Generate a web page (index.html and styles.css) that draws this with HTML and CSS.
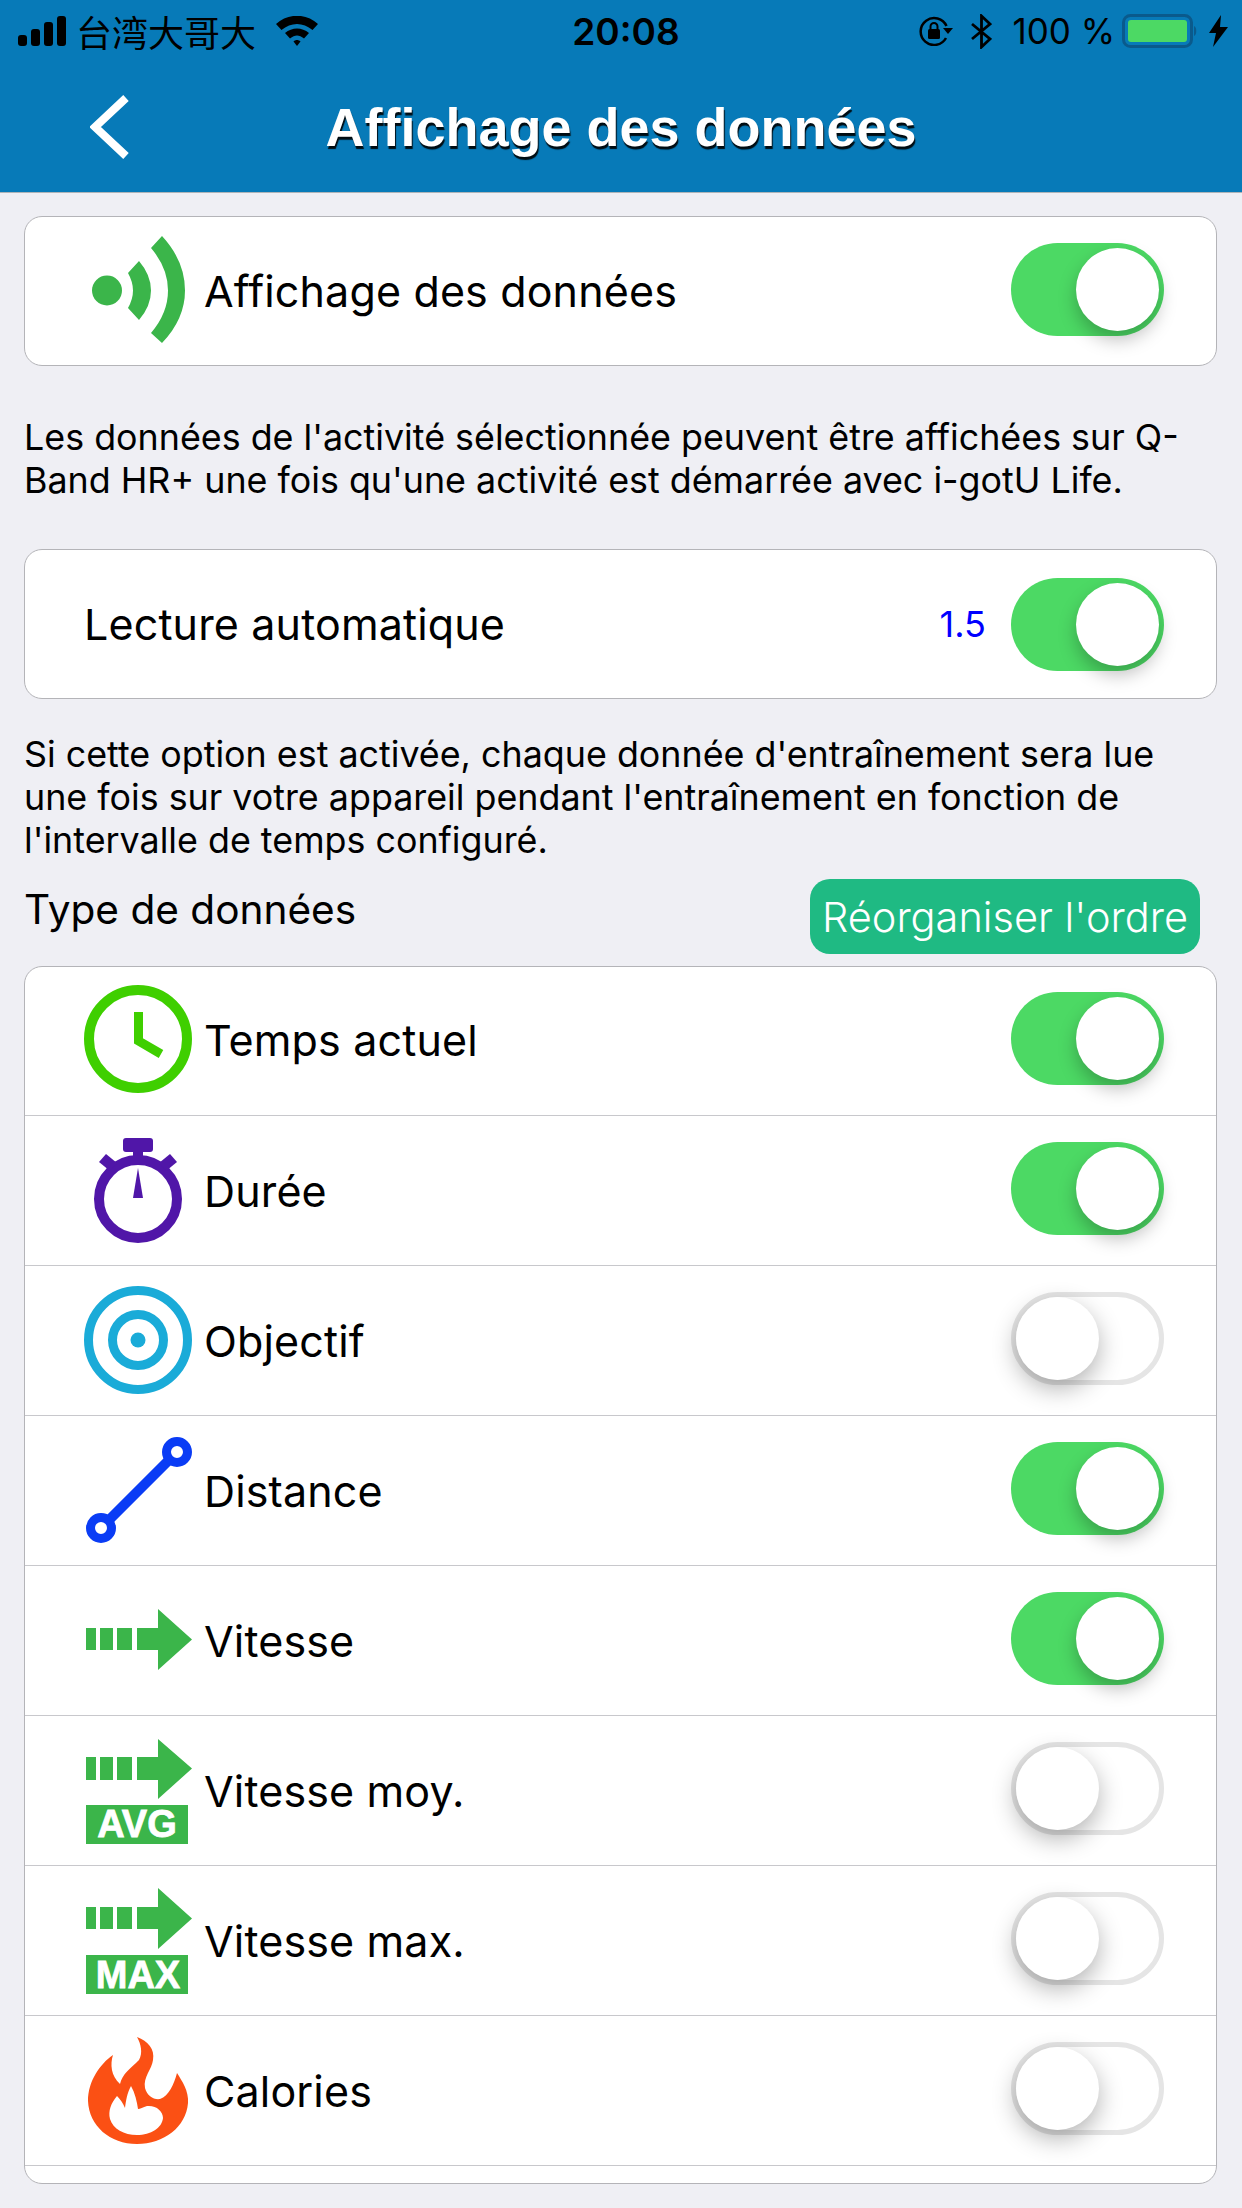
FILE: index.html
```html
<!DOCTYPE html>
<html lang="fr">
<head>
    <meta charset="UTF-8">
    <title>Affichage des données</title>
    <link rel="stylesheet" href="styles.css">
</head>
<body>
    <div class="top">
        <div class="status">
            <div class="status-left">
                <svg class="signal" width="48" height="30" viewBox="0 0 48 30" fill="#000">
                    <rect x="0" y="19" width="9" height="11" rx="3"/>
                    <rect x="13" y="13" width="9" height="17" rx="3"/>
                    <rect x="26" y="6" width="9" height="24" rx="3"/>
                    <rect x="39" y="0" width="9" height="30" rx="3"/>
                </svg>
                <span class="carrier">台湾大哥大</span>
                <svg class="wifi" width="42" height="30" viewBox="0 0 42 30" fill="#000">
                    <path d="M0 8C12-3 30-3 42 8L36.5 14C27 6 15 6 5.5 14Z"/>
                    <path d="M9 17C16 11 26 11 33 17L28 22.5C23 18.5 19 18.5 14 22.5Z"/>
                    <path d="M17.5 25.5C19.5 23.5 22.5 23.5 24.5 25.5L21 30Z"/>
                </svg>
            </div>
            <div class="time">20:08</div>
            <div class="status-right">
                <svg width="34" height="30" viewBox="0 0 34 30">
                    <path d="M27 22A13.5 13.5 0 1 1 27.500 10" fill="none" stroke="#000" stroke-width="2.500"/>
                    <path d="M24 12H34L29 18Z" fill="#000"/>
                    <rect x="9" y="13" width="12" height="10" rx="1.500" fill="#000"/>
                    <path d="M11.500 13V10.500A3.500 3.500 0 0 1 18.500 10.500V13" fill="none" stroke="#000" stroke-width="2"/>
                </svg>
                <svg class="bt" width="21" height="35" viewBox="0 0 21 35">
                    <path d="M1 10L19 25L10.500 33V2L19 10L1 25" fill="none" stroke="#000" stroke-width="2.800"/>
                </svg>
                <span class="percent">100 %</span>
                <svg class="battery" width="78" height="34" viewBox="0 0 78 34">
                    <rect x="1.500" y="1.500" width="68" height="31" rx="7" fill="none" stroke="#0a5a8c" stroke-width="3"/>
                    <rect x="6" y="6" width="59" height="22" rx="3" fill="#4cd964"/>
                    <path d="M72 12C75 13 75 21 72 22Z" fill="#0a5a8c"/>
                </svg>
                <svg class="bolt" width="19" height="32" viewBox="0 0 19 32">
                    <path d="M12 0L0 18H7L4 32L19 12H11Z" fill="#000"/>
                </svg>
            </div>
        </div>
        <div class="nav">
            <svg class="back" width="40" height="64" viewBox="0 0 40 64">
                <path d="M36 3L5 32L36 61" fill="none" stroke="#fff" stroke-width="8"/>
            </svg>
            <h1>Affichage des données</h1>
        </div>
    </div>

    <div class="content">
        <div class="card">
            <div class="row">
                <svg class="icon" width="120" height="120" viewBox="0 0 120 120" fill="#3bb54a">
                    <circle cx="27" cy="59.500" r="15"/>
                    <path d="M48 42L59 30Q71 44 71 59.500Q71 75 59 89L48 77Q53 68 53 59.500Q53 51 48 42Z"/>
                    <path d="M71 17L82 5Q105 30 105 59.500Q105 88 82 112L71 102Q88 82 88 59.500Q88 37 71 17Z"/>
                </svg>
                <span class="label">Affichage des données</span>
                <div class="toggle on"></div>
            </div>
        </div>

        <p class="note first">Les données de l'activité sélectionnée peuvent être affichées sur Q-Band HR+ une fois qu'une activité est démarrée avec i-gotU Life.</p>

        <div class="card">
            <div class="row plain">
                <span class="label">Lecture automatique</span>
                <span class="interval">1.5</span>
                <div class="toggle on"></div>
            </div>
        </div>

        <p class="note second">Si cette option est activée, chaque donnée d'entraînement sera lue une fois sur votre appareil pendant l'entraînement en fonction de l'intervalle de temps configuré.</p>

        <div class="type-head">
            <span class="type-title">Type de données</span>
            <button class="btn">Réorganiser l'ordre</button>
        </div>

        <div class="card list">
            <div class="row">
                <svg class="icon" width="120" height="120" viewBox="0 0 120 120">
                    <circle cx="58" cy="59" r="49" fill="none" stroke="#3fcf00" stroke-width="10"/>
                    <path d="M58.500 32V61L81 74" fill="none" stroke="#3fcf00" stroke-width="9"/>
                </svg>
                <span class="label">Temps actuel</span>
                <div class="toggle on"></div>
            </div>
            <div class="row">
                <svg class="icon" width="120" height="120" viewBox="0 0 120 120" fill="#5016a8">
                    <circle cx="58" cy="68" r="39" fill="none" stroke="#5016a8" stroke-width="10"/>
                    <rect x="43" y="7" width="30" height="14" rx="3"/>
                    <rect x="53" y="20" width="10" height="10"/>
                    <path d="M19 31L26 23L37 32L30 40Z"/>
                    <path d="M97 31L90 23L79 32L86 40Z"/>
                    <path d="M58 37L63 67H53Z"/>
                </svg>
                <span class="label">Durée</span>
                <div class="toggle on"></div>
            </div>
            <div class="row">
                <svg class="icon" width="120" height="120" viewBox="0 0 120 120" fill="none" stroke="#1aabd8">
                    <circle cx="58" cy="59" r="49.500" stroke-width="9"/>
                    <circle cx="58" cy="59" r="25.500" stroke-width="9"/>
                    <circle cx="58" cy="59" r="7.500" fill="#1aabd8" stroke="none"/>
                </svg>
                <span class="label">Objectif</span>
                <div class="toggle off"></div>
            </div>
            <div class="row">
                <svg class="icon" width="120" height="120" viewBox="0 0 120 120" fill="none" stroke="#0a3cf5">
                    <path d="M89 29L29 89" stroke-width="10"/>
                    <circle cx="97" cy="21" r="10.500" stroke-width="9"/>
                    <circle cx="21" cy="97" r="10.500" stroke-width="9"/>
                </svg>
                <span class="label">Distance</span>
                <div class="toggle on"></div>
            </div>
            <div class="row">
                <svg class="icon" width="120" height="120" viewBox="0 0 120 120" fill="#3bb54a">
                    <path d="M6 47H16V69H6ZM20 47H33V69H20ZM37 47H52V69H37ZM57 47H78V28L112 58.500L78 89V69H57Z"/>
                </svg>
                <span class="label">Vitesse</span>
                <div class="toggle on"></div>
            </div>
            <div class="row">
                <svg class="icon" width="120" height="120" viewBox="0 0 120 120" fill="#3bb54a">
                    <path d="M6 26H16V49H6ZM20 26H33V49H20ZM37 26H52V49H37ZM57 26H78V8L112 37.500L78 68V49H57Z"/>
                    <rect x="6" y="74" width="102" height="39"/>
                    <text class="badge-text" x="57" y="106">AVG</text>
                </svg>
                <span class="label">Vitesse moy.</span>
                <div class="toggle off"></div>
            </div>
            <div class="row">
                <svg class="icon" width="120" height="120" viewBox="0 0 120 120" fill="#3bb54a">
                    <path d="M6 26H16V48H6ZM20 26H33V48H20ZM37 26H52V48H37ZM57 26H78V7L112 37.500L78 68V48H57Z"/>
                    <rect x="6" y="74" width="102" height="39"/>
                    <text class="badge-text" x="58" y="107">MAX</text>
                </svg>
                <span class="label">Vitesse max.</span>
                <div class="toggle off"></div>
            </div>
            <div class="row">
                <svg class="icon" width="120" height="120" viewBox="0 0 120 120">
                    <path fill-rule="evenodd" fill="#fb5014" d="M57 6C68 10 75 18 73 29C72 38 63 46 65 57C67 65 74 69 80 68C89 65 94 53 97 42C102 50 109 60 108 72C106 96 84 113 57 113C30 113 9 95 8 70C8 50 20 33 33 24C30 33 31 45 40 53C42 43 51 37 59 29C63 22 61 13 57 6ZM51 55C47 62 46 70 45 77C43 72 40 68 37 65C31 72 28 80 30 88C33 98 44 104 57 104C71 104 82 97 83 87C83 80 76 74 67 75C63 76 60 78 58 78C57 71 55 62 51 55Z"/>
                </svg>
                <span class="label">Calories</span>
                <div class="toggle off"></div>
            </div>
            <div class="row-tail"></div>
        </div>
    </div>
</body>
</html>
```

FILE: styles.css
```css
* { margin: 0; padding: 0; box-sizing: border-box; }
body {
    font-family: Inter, "Noto Sans", sans-serif;
    background: #efeff4;
    color: #000;
    width: 1242px;
    height: 2208px;
    overflow: hidden;
}
.top {
    background: #077ab8;
    height: 193px;
    border-bottom: 1px solid #aeb4b8;
}
.status {
    height: 62px;
    display: grid;
    grid-template-columns: 1fr auto 1fr;
    align-items: center;
    padding: 0 14px 0 18px;
}
.status-left { display: flex; align-items: center; }
.status-right { display: flex; align-items: center; justify-content: flex-end; }
.carrier {
    font-family: "Noto Sans CJK TC", sans-serif;
    font-size: 36px;
    margin-left: 10px;
    margin-right: 20px;
}
.time { font-size: 37px; font-weight: 600; margin-left: 6px; }
.percent { font-size: 35px; margin: 0 7px 0 20px; }
.status-right .bt { margin-left: 18px; }
.status-right .bolt { margin-left: 9px; }
.nav {
    height: 130px;
    display: grid;
    grid-template-columns: 1fr auto 1fr;
    align-items: center;
}
.back { margin-left: 90px; }
.nav h1 {
    font-family: "Liberation Sans", Arial, sans-serif;
    font-size: 54px;
    font-weight: bold;
    color: #fff;
    text-shadow: 1px 3px 1px rgba(0,0,0,0.9);
}
.content { padding: 23px 25px 0 24px; }
.card {
    background: #fff;
    border: 1px solid #b4b4b8;
    border-radius: 18px;
    overflow: hidden;
}
.row {
    height: 148px;
    display: flex;
    align-items: center;
    padding-left: 55px;
    padding-right: 52px;
}
.list .row { height: 150px; border-bottom: 1px solid #c8c8cc; }
.list .row:first-child { height: 149px; padding-bottom: 2px; }
.row.plain { padding-left: 59px; }
.row-tail { height: 17px; }
.icon { flex: none; margin-right: 4px; }
.label { font-size: 43px; letter-spacing: 0.15px; flex: 1; }
.interval { font-size: 36px; color: #0000ff; margin-right: 25px; }
.badge-text {
    font-family: "Liberation Sans", Arial, sans-serif;
    font-size: 38px;
    font-weight: bold;
    fill: #fff;
    stroke: #fff;
    stroke-width: 0.8;
    text-anchor: middle;
}
.toggle {
    position: relative;
    flex: none;
    width: 153px;
    height: 93px;
    border-radius: 47px;
    margin-bottom: 4px;
}
.row.plain .toggle { margin-bottom: 0; }
.toggle.on { background: #4cd964; }
.toggle.off { border: 5px solid #e5e5e5; }
.toggle::after {
    content: "";
    position: absolute;
    top: 5px;
    left: 65px;
    width: 83px;
    height: 83px;
    border-radius: 50%;
    background: #fff;
    box-shadow: 0 9px 18px rgba(0,0,0,0.25);
}
.toggle.off::after { top: 0; left: 0; box-shadow: 0 9px 24px rgba(0,0,0,0.3); }
.note { font-size: 35.850px; line-height: 43px; }
.note.first { margin-top: 50px; margin-bottom: 47px; }
.note.second { margin-top: 34px; }
.type-head {
    display: flex;
    justify-content: space-between;
    align-items: center;
    margin-top: 17px;
    margin-bottom: 12px;
    padding-right: 17px;
}
.type-title { font-size: 40.600px; margin-bottom: 14px; }
.btn {
    background: #1fba83;
    color: #fff;
    border: none;
    border-radius: 20px;
    width: 390px;
    height: 75px;
    font-family: Inter, sans-serif;
    font-size: 41.500px;
    font-weight: 300;
}
```
